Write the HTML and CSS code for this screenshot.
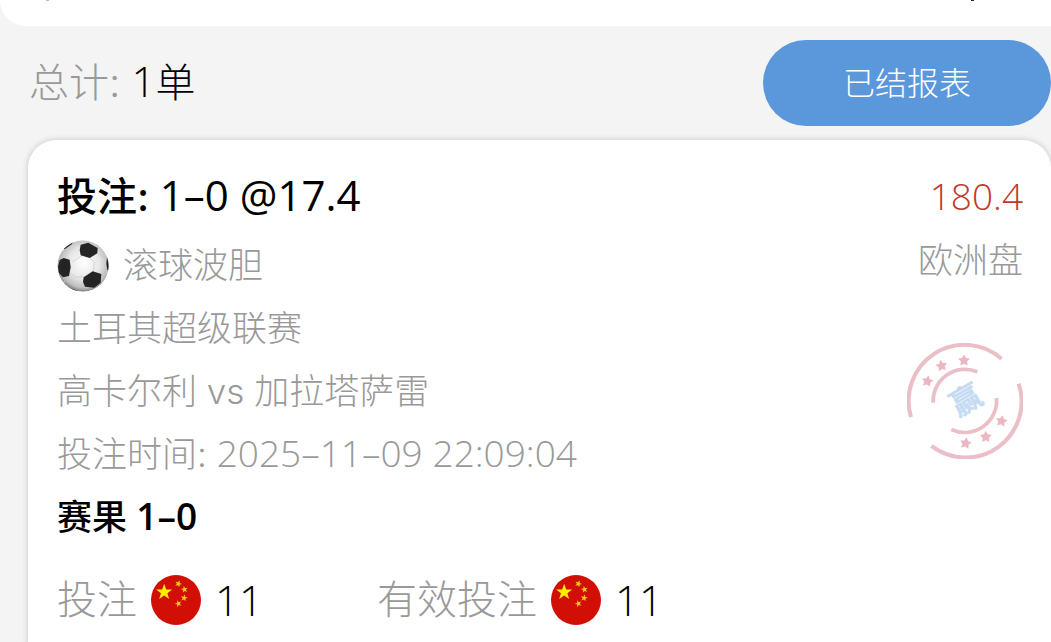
FILE: index.html
```html
<!DOCTYPE html>
<html lang="zh-CN">
<head>
    <meta charset="UTF-8">
    <meta name="viewport" content="width=device-width, initial-scale=1.0">
    <title>投注记录</title>
    <link rel="stylesheet" href="styles.css">
</head>
<body>
    <svg class="symbols" aria-hidden="true">
        <symbol id="star" viewBox="-10 -10 20 20">
            <path d="M0-10 2.4-3.2 9.5-3.1 3.8 1.2 5.9 8.1 0 4-5.9 8.1-3.8 1.2-9.5-3.1-2.4-3.2Z"/>
        </symbol>
        <symbol id="fat-star" viewBox="-10 -10 20 20">
            <path d="M0-10 3.2-4.2 9.7-3.1 5.1 1.7 6 8.3 0 5.4-6 8.3-5.1 1.7-9.7-3.1-3.2-4.2Z"/>
        </symbol>
        <symbol id="flag" viewBox="0 0 148 148">
            <circle cx="74" cy="74" r="74" fill="#d10f04"/>
            <use href="#star" x="14" y="26" width="50" height="50" fill="#ffee00"/>
            <g fill="#f8c51c">
                <use href="#star" x="70" y="15" width="22" height="22" transform="rotate(20 81 26)"/>
                <use href="#star" x="88" y="32" width="22" height="22" transform="rotate(-10 99 43)"/>
                <use href="#star" x="87" y="57" width="22" height="22" transform="rotate(10 98 68)"/>
                <use href="#star" x="70" y="74" width="22" height="22" transform="rotate(-20 81 85)"/>
            </g>
        </symbol>
    </svg>

    <header class="top-card">
        <span class="tick tick-blue"></span>
        <span class="tick"></span>
    </header>

    <div class="summary">
        <div class="total"><span class="label">总计:</span> <span class="num-large">1</span>单</div>
        <button class="report-button" type="button">已结报表</button>
    </div>

    <main class="bet-card">
        <div class="bet-main">
            <div class="bet-info">
                <h1 class="bet-title">投注: <span class="num-large">1–0 @17.4</span></h1>
                <div class="row bet-type">
                    <svg class="ball" viewBox="0 0 156 156" aria-hidden="true">
                        <defs>
                            <radialGradient id="shade" cx="0.52" cy="0.45" r="0.56">
                                <stop offset="0" stop-color="#ffffff"/>
                                <stop offset="0.55" stop-color="#e6e6e6"/>
                                <stop offset="0.85" stop-color="#bdbdbd"/>
                                <stop offset="1" stop-color="#777777"/>
                            </radialGradient>
                            <clipPath id="ball-edge"><circle cx="78" cy="78" r="77"/></clipPath>
                        </defs>
                        <g clip-path="url(#ball-edge)">
                            <circle cx="78" cy="78" r="77" fill="url(#shade)"/>
                            <g fill="none" stroke="#c8c8c8" stroke-width="2">
                                <path d="M75 46 46 66M40 100 57 112 82 110M109 96 112 66 98 54M122 40 140 52M17 108 24 128"/>
                            </g>
                            <g fill="#242424">
                                <path d="M71 14 94 8 122 24 121 40 98 54 71 46 68 30Z"/>
                                <path d="M8 60 20 54 38 59 41 82 36 108 18 112 6 99 3 80Z"/>
                                <path d="M80 112 107 94 133 102 131 128 112 143 84 140 78 126Z"/>
                                <path d="M150 50 158 60 158 92 151 90 148 72Z"/>
                                <path d="M18 27 48 5 45 12 24 27Z"/>
                                <path d="M22 134 38 143 60 152 60 158 30 154Z"/>
                            </g>
                        </g>
                    </svg>
                    <span>滚球波胆</span>
                </div>
                <div class="row">土耳其超级联赛</div>
                <div class="row">高卡尔利 vs 加拉塔萨雷</div>
                <div class="row">投注时间: <span class="num">2025–11–09</span> <span class="num">22:09:04</span></div>
                <div class="row result">赛果 <span class="num">1–0</span></div>
            </div>

            <div class="bet-side">
                <div class="payout"><span class="num">180.4</span></div>
                <div class="market">欧洲盘</div>
                <svg class="stamp" viewBox="54 38 346 346" role="img" aria-label="赢">
                    <g fill="none" stroke="#ebbfc8">
                        <path stroke-width="12" d="M336 85A167 167 0 0 0 66 259M387 159A167 167 0 0 1 127 345"/>
                        <path stroke-width="11" d="M264 124A95 95 0 0 0 132 216M321 202A95 95 0 0 1 186 296"/>
                    </g>
                    <g fill="#ecb7c2">
                        <use href="#fat-star" x="206" y="72" width="36" height="36"/>
                        <use href="#fat-star" x="139" y="88" width="36" height="36" transform="rotate(-10 157 106)"/>
                        <use href="#fat-star" x="97" y="134" width="36" height="36" transform="rotate(10 115 152)"/>
                        <use href="#fat-star" x="318" y="253" width="36" height="36" transform="rotate(10 336 271)"/>
                        <use href="#fat-star" x="271" y="300" width="36" height="36"/>
                        <use href="#fat-star" x="211" y="319" width="36" height="36" transform="rotate(10 229 337)"/>
                    </g>
                    <text class="stamp-text" x="231" y="242" text-anchor="middle" transform="rotate(-30 229 211)">赢</text>
                </svg>
            </div>
        </div>

        <div class="stakes">
            <div class="stake">
                <span class="label">投注</span>
                <svg class="flag" aria-hidden="true"><use href="#flag"/></svg>
                <span class="num-large">11</span>
            </div>
            <div class="stake">
                <span class="label">有效投注</span>
                <svg class="flag" aria-hidden="true"><use href="#flag"/></svg>
                <span class="num-large">11</span>
            </div>
        </div>
    </main>
</body>
</html>
```

FILE: styles.css
```css
* {
    box-sizing: border-box;
}

body {
    margin: 0;
    min-height: 100vh;
    overflow: hidden;
    background-color: #f4f4f4;
    color: #000;
    font-family: Inter, "Noto Sans CJK SC", sans-serif;
    font-weight: 300;
}

.symbols {
    position: absolute;
    width: 0;
    height: 0;
}

.top-card {
    display: flex;
    justify-content: space-between;
    height: 26px;
    padding: 0 77px 0 46px;
    background-color: #fff;
    border-bottom-left-radius: 28px;
}

.tick {
    width: 3px;
    height: 1px;
    background-color: #222;
}

.tick-blue {
    background-color: #a9c3cc;
}

.summary {
    display: flex;
    justify-content: space-between;
    align-items: center;
    padding: 14px 0 14px 29px;
}

.total {
    font-size: 40px;
    line-height: 62px;
}

.label {
    color: #999;
}

/* digits are set a little larger than the Chinese text beside them */
.num,
.num-large {
    font-family: "Open Sans", sans-serif;
    line-height: 1;
}

.num {
    font-size: 37px;
}

.num-large {
    font-size: 42px;
}

.report-button {
    width: 288px;
    height: 86px;
    padding: 0 0 4px;
    border: none;
    border-radius: 43px;
    background-color: #5b97db;
    color: #fff;
    font-family: inherit;
    font-size: 32px;
    font-weight: 300;
    cursor: pointer;
}

.bet-card {
    margin-left: 28px;
    padding: 26px 28px 40px 29px;
    background-color: #fff;
    border-radius: 28px;
    box-shadow: 0 0 6px rgba(0, 0, 0, 0.2);
}

.bet-main {
    display: flex;
    justify-content: space-between;
}

.bet-title {
    margin: 0 0 6px;
    font-size: 40px;
    font-weight: 500;
    line-height: 62px;
}

.row {
    color: #999;
    font-size: 35px;
    line-height: 63px;
}

.bet-type {
    display: flex;
    align-items: center;
    gap: 14px;
}

.ball {
    width: 52px;
    height: 52px;
}

.result {
    color: #000;
    font-weight: 500;
}

.result .num {
    font-weight: 600;
}

.bet-side {
    display: flex;
    flex-direction: column;
    align-items: flex-end;
    font-size: 35px;
    line-height: 63px;
}

.payout {
    color: #c0392b;
}

.market {
    color: #999;
}

.stamp {
    width: 116px;
    height: 116px;
    margin-top: 51px;
}

.stamp-text {
    fill: #c5dbf2;
    font-size: 92px;
    font-weight: 900;
}

.stakes {
    display: flex;
    margin-top: 20px;
    font-size: 40px;
    line-height: 62px;
}

.stake {
    display: flex;
    align-items: center;
    gap: 14px;
    width: 320px;
}

.flag {
    width: 50px;
    height: 50px;
}
```
